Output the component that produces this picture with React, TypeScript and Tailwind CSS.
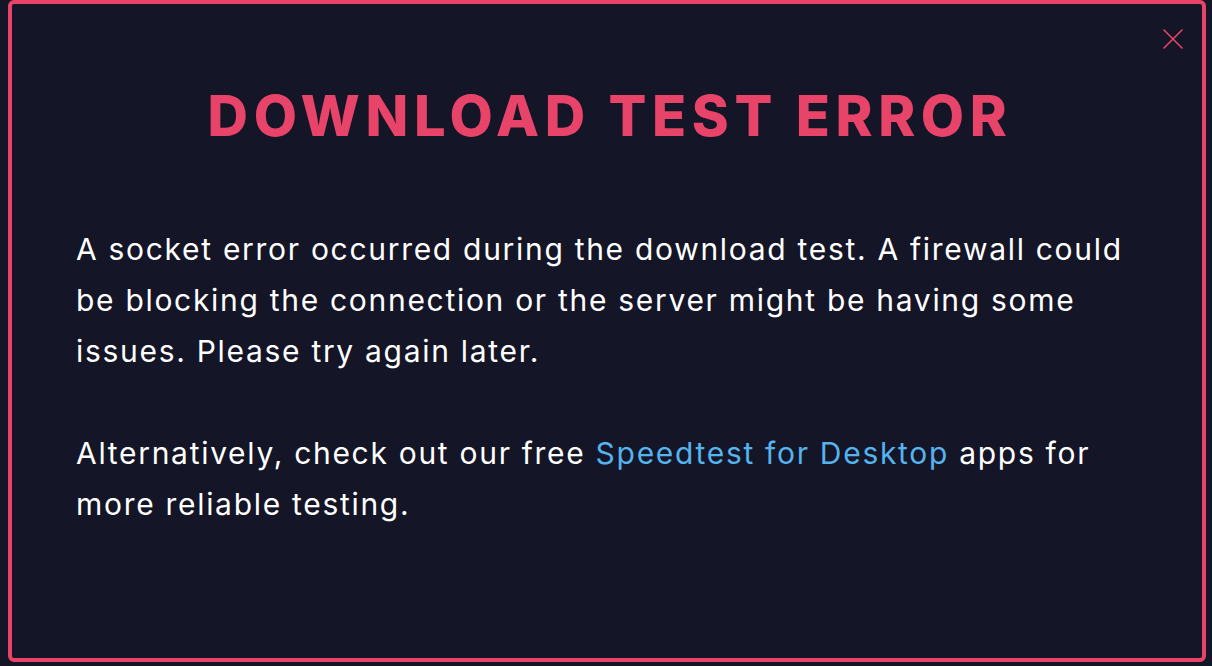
export default function App() {
  return (
    <div className="min-h-[666px] bg-[#141526] pl-2 pr-1.5 pb-1" style={{ fontFamily: 'Inter, "Open Sans", sans-serif' }}>
      <div className="relative h-[662px] rounded-md border-4 border-[#e8446a] px-[64px] pt-[84px]">
        <button className="absolute right-[19px] top-[25px] text-[#e8446a]" aria-label="Close">
          <svg width="20" height="20" viewBox="0 0 20 20" fill="none" stroke="currentColor" strokeWidth="1.6" strokeLinecap="round">
            <path d="M1 1L19 19M19 1L1 19" />
          </svg>
        </button>
        <h1 className="pl-[6px] text-center text-[56px] font-extrabold leading-none tracking-[5.6px] text-[#e8446a]">
          DOWNLOAD TEST ERROR
        </h1>
        <div className="mt-[80px] text-[30px] leading-[51px] tracking-[1.7px] text-white">
          <p>
            A socket error occurred during the download test. A firewall could<br />
            be blocking the connection or the server might be having some<br />
            issues. Please try again later.
          </p>
          <p className="mt-[51px]">
            Alternatively, check out our free{' '}
            <a href="#" className="text-[#55b3ee]">Speedtest for Desktop</a> apps for<br />
            more reliable testing.
          </p>
        </div>
      </div>
    </div>
  );
}
